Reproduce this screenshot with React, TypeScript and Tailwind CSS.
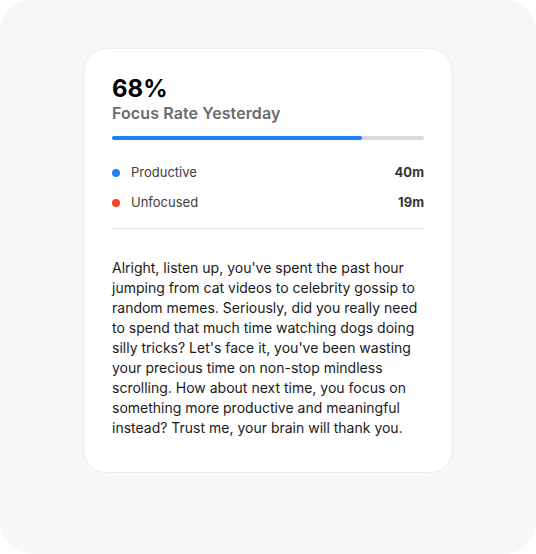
const stats = [
  { label: "Productive", value: "40m", dot: "bg-[#1e83f7]" },
  { label: "Unfocused", value: "19m", dot: "bg-[#fb4127]" },
];

export default function App() {
  return (
    <div className="h-[554px] w-[536px] bg-white font-['Inter',sans-serif]">
      <div className="flex h-full w-full justify-center rounded-[32px] bg-[#f7f7f7] pt-12">
        <div className="h-[425px] w-[370px] rounded-3xl border border-[#ececec] bg-white px-7 pt-[26px]">
          <div className="text-2xl font-bold leading-7 text-black">68%</div>
          <div className="text-base font-semibold leading-5 tracking-[0.1px] text-[#6b6b6b]">Focus Rate Yesterday</div>

          <div className="mt-[13px] h-1 w-full rounded-full bg-[#d9d9d9]">
            <div className="h-1 w-[80%] rounded-full bg-[#1e83f7]" />
          </div>

          <div className="mt-[23px] flex flex-col gap-2.5">
            {stats.map((s) => (
              <div key={s.label} className="flex h-5 items-center justify-between text-[13px]">
                <div className="flex items-center gap-[11px]">
                  <span className={`h-2 w-2 rounded-full ${s.dot}`} />
                  <span className="text-[#3d3d3d]">{s.label}</span>
                </div>
                <span className="font-bold text-[#333]">{s.value}</span>
              </div>
            ))}
          </div>

          <div className="mt-[15px] h-px w-full bg-[#e8e8e8]" />

          <p className="mt-[29px] text-sm leading-5 text-[#1a1a1a]">
            Alright, listen up, you've spent the past hour jumping from cat videos to celebrity gossip to random
            memes. Seriously, did you really need to spend that much time watching dogs doing silly tricks? Let's
            face it, you've been wasting your precious time on non-stop mindless scrolling. How about next time,
            you focus on something more productive and meaningful instead? Trust me, your brain will thank you.
          </p>
        </div>
      </div>
    </div>
  );
}
